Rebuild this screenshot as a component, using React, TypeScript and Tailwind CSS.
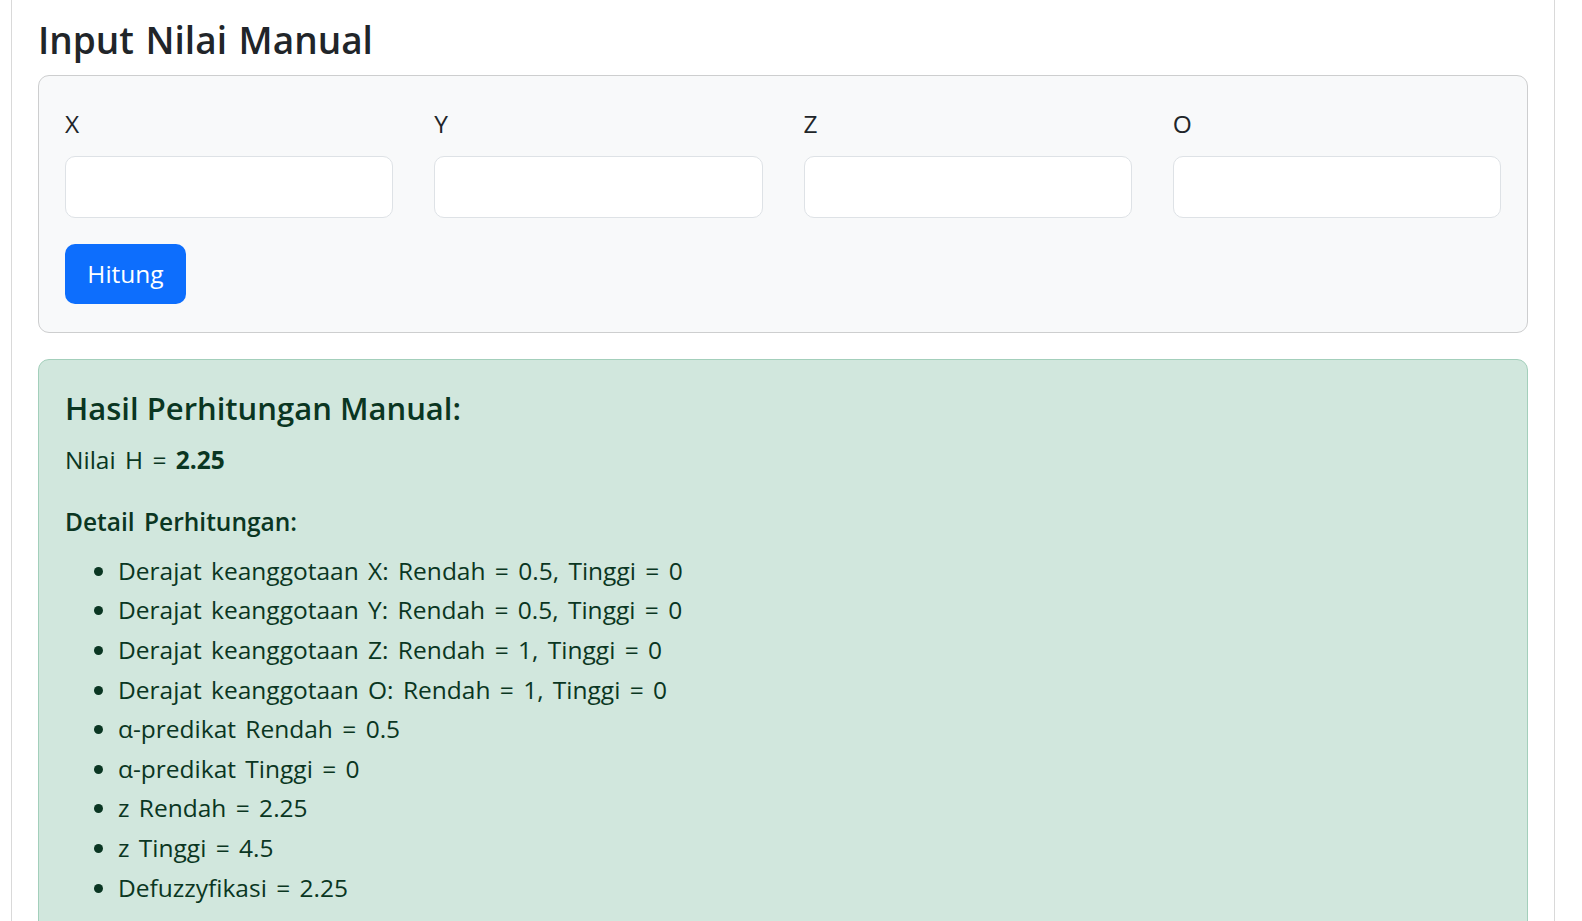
import React from 'react';

const details = [
  'Derajat keanggotaan X: Rendah = 0.5, Tinggi = 0',
  'Derajat keanggotaan Y: Rendah = 0.5, Tinggi = 0',
  'Derajat keanggotaan Z: Rendah = 1, Tinggi = 0',
  'Derajat keanggotaan O: Rendah = 1, Tinggi = 0',
  'α-predikat Rendah = 0.5',
  'α-predikat Tinggi = 0',
  'z Rendah = 2.25',
  'z Tinggi = 4.5',
  'Defuzzyfikasi = 2.25',
];

const fields = ['X', 'Y', 'Z', 'O'];

export default function App() {
  return (
    <div className="min-h-screen bg-white font-['Open_Sans','Noto_Sans',sans-serif] text-[24.5px] leading-[39.6px] text-[#212529] [word-spacing:3px]">
      <div className="ml-[11px] min-h-[921px] w-[1544px] border-x border-[#d9d9d9] px-[26px] pt-[16px]">
        <h3 className="mb-[11px] text-[37px] font-semibold leading-[48px] [word-spacing:2px]">Input Nilai Manual</h3>

        {/* form input manual */}
        <div className="rounded-[11px] border border-[#cdcecf] bg-[#f8f9fa] px-[26px] pb-[28px] pt-[28px]">
          <div className="grid grid-cols-4 gap-x-[41px]">
            {fields.map((f) => (
              <div key={f}>
                <label className="mb-[12px] block">{f}</label>
                <input
                  type="text"
                  className="block h-[62px] w-full rounded-[10px] border border-[#dee2e6] bg-white px-4 outline-none"
                />
              </div>
            ))}
          </div>
          <button className="mt-[26px] h-[60px] w-[121px] rounded-[10px] bg-[#0d6efd] text-white">
            Hitung
          </button>
        </div>

        {/* hasil */}
        <div className="mt-[26px] rounded-t-[11px] border border-[#a3cfbb] bg-[#d1e7dd] px-[26px] pb-[30px] pt-[28px] text-[#0a3622]">
          <h4 className="mb-[11px] text-[31px] font-semibold leading-[41px] [word-spacing:0px]">Hasil Perhitungan Manual:</h4>
          <p className="mb-[23px]">
            Nilai H = <strong className="font-bold">2.25</strong>
          </p>
          <p className="mb-[9px] font-semibold">Detail Perhitungan:</p>
          <ul className="list-disc pl-[53px]">
            {details.map((d) => (
              <li key={d}>{d}</li>
            ))}
          </ul>
        </div>
      </div>
    </div>
  );
}
